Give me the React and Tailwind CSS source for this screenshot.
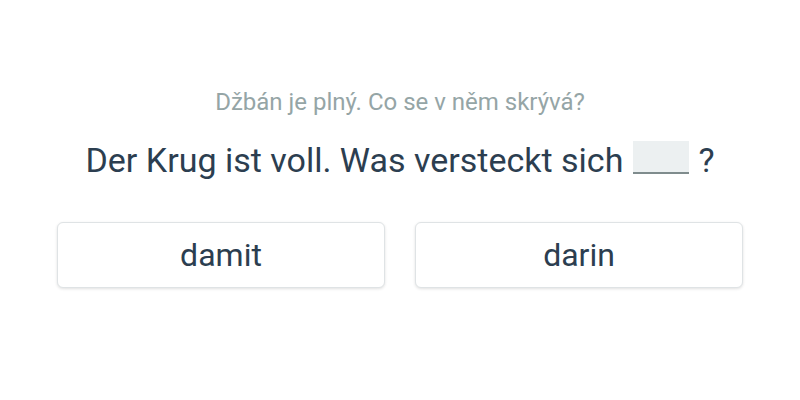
export default function App() {
  const options = ["damit", "darin"];
  return (
    <div className="w-[800px] h-[400px] bg-white font-['Roboto',sans-serif] pt-[88px]">
      <div className="w-[686px] mx-auto flex flex-col items-center">
        <p className="text-[24px] leading-[28px] text-[#95a5a6]">Džbán je plný. Co se v něm skrývá?</p>
        <h1 className="mt-[24px] text-[34px] leading-[40px] text-[#2c3e50] flex items-start">
          <span>Der Krug ist voll. Was versteckt sich</span>
          <span className="inline-block w-[56px] h-[33px] mt-[1px] ml-[10px] mr-[9px] bg-[#ecf0f1] border-b-2 border-[#7f8c8d]"></span>
          <span>?</span>
        </h1>
        <div className="mt-[42px] w-full grid grid-cols-2 gap-[30px]">
          {options.map((o) => (
            <button key={o} className="h-[66px] rounded-[6px] border border-[#dfe3e5] bg-white shadow-[0_1px_3px_rgba(0,0,0,0.12)] text-[32px] text-[#2c3e50]">
              {o}
            </button>
          ))}
        </div>
      </div>
    </div>
  );
}
